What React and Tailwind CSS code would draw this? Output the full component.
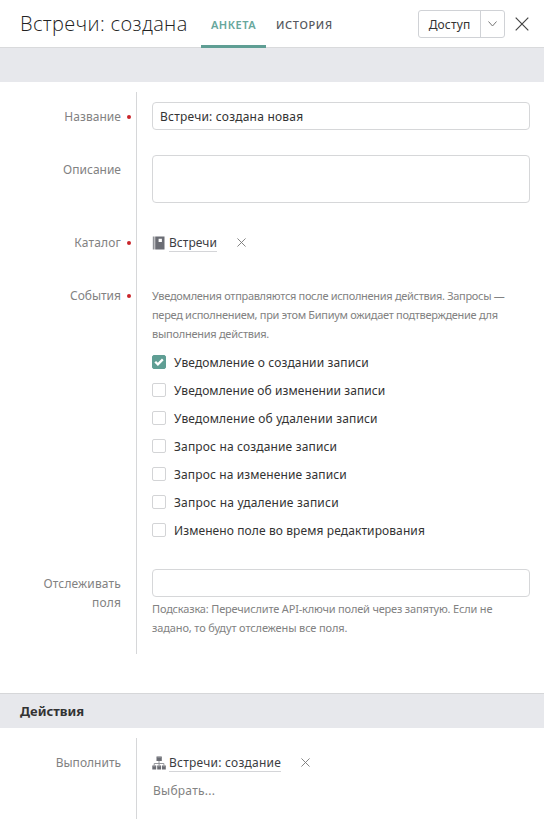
import React from "react";

const events = [
  { label: "Уведомление о создании записи", on: true, cls: "tracking-[0.12px]" },
  { label: "Уведомление об изменении записи", cls: "tracking-[0.08px]" },
  { label: "Уведомление об удалении записи", cls: "tracking-[0.16px]" },
  { label: "Запрос на создание записи", cls: "tracking-[0.15px]" },
  { label: "Запрос на изменение записи", cls: "tracking-[0.12px]" },
  { label: "Запрос на удаление записи", cls: "tracking-[0.2px]" },
  { label: "Изменено поле во время редактирования", cls: "tracking-[0.1px]" },
];

function Row({ label, required, height, labelCls = "", children }) {
  return (
    <div className={`flex ${height}`}>
      <div className="flex w-[136px] shrink-0 justify-end pt-[15px]">
        <div className={`w-[90px] text-right leading-[19px] text-[#828282] ${labelCls}`}>{label}</div>
        <div className="w-[15px] pl-[6px] pt-2">
          {required && <div className="size-1 rounded-full bg-[#c9252b]" />}
        </div>
      </div>
      <div className="w-[394px] border-l border-[#d6d7d9] pl-[15px]">{children}</div>
    </div>
  );
}

function Cross({ size, color }) {
  return (
    <svg width={size} height={size} viewBox="0 0 10 10" fill="none" stroke={color} strokeWidth={size > 12 ? 0.85 : 1} className="shrink-0">
      <path d="M.5.5l9 9M9.5.5l-9 9" />
    </svg>
  );
}

function Link({ icon, cls, children }) {
  return (
    <div className="flex h-[19px] items-center">
      <div className="w-[17px] shrink-0">{icon}</div>
      <span className={`h-[19px] border-b border-[#d4d5d8] leading-[20px] text-[#3b3d42] ${cls}`}>{children}</span>
      <div className="ml-[20px]"><Cross size={9} color="#777" /></div>
    </div>
  );
}

const Book = (
  <svg width="13" height="14" viewBox="0 0 13 14" fill="#6b6d74">
    <path d="M.8.5h1.8v13H.8z" opacity=".75" />
    <path d="M3.2.5h9.3v13H3.2zM6.6 2.7v3.2h3.3V2.7z" fillRule="evenodd" />
  </svg>
);

const Tree = (
  <svg width="14" height="14" viewBox="0 0 14 14" fill="#6b6d74">
    <path d="M4.5.5h5.3v4.6H4.5zM.3 9.4h3.9v4H.3zM5.2 9.4h3.9v4H5.2zM10 9.4h3.8v4H10z" />
    <path d="M7 5v2.5M2.2 9.4V7.5h9.7v1.9M7.1 7.5v1.9" fill="none" stroke="#8b8d93" strokeWidth=".9" />
    <path d="M5.3 1.3h3.7M1 10.2h2.5M5.9 10.2h2.5M10.7 10.2h2.4" fill="none" stroke="#9c9ea4" strokeWidth=".7" />
  </svg>
);

export default function App() {
  return (
    <div className="h-[821px] w-[544px] overflow-hidden bg-white font-['Noto_Sans','Open_Sans',sans-serif] text-[12px] text-[#333]">
      <header className="flex h-[48px] border-b border-[#d9dadc]">
        <h1 className="w-[181px] shrink-0 whitespace-nowrap pl-[20px] font-['Open_Sans','Noto_Sans',sans-serif] text-[20px] font-[350] leading-[48px] tracking-[0.35px] text-[#222]">Встречи: создана</h1>
        <nav className="ml-[20px] flex shrink-0 leading-[50px] text-[11px]">
          <div className="h-[48px] w-[65px] border-b-[3px] border-[#5f9e94] text-center font-semibold tracking-[0.5px] text-[#67a79c]">АНКЕТА</div>
          <div className="ml-[10px] font-medium tracking-[0.65px] text-[#55585e]">ИСТОРИЯ</div>
        </nav>
        <div className="ml-auto mr-[15px] flex items-center">
          <div className="flex h-[28px] w-[87px] rounded-[3px] border border-[#d0d2d6]">
            <div className="w-[62px] border-r border-[#d0d2d6] text-center leading-[27px] tracking-[0.15px]">Доступ</div>
            <div className="flex flex-1 items-center justify-center">
              <svg width="9" height="6" viewBox="0 0 9 6" fill="none" stroke="#777"><path d="M.5.5l4 4.5 4-4.5" /></svg>
            </div>
          </div>
          <div className="ml-[10px]"><Cross size={14} color="#444" /></div>
        </div>
      </header>
      <div className="h-[34px] bg-[#e7e8ec]" />
      <section className="pt-[10px]">
        <Row label="Название" required height="h-[53px]" labelCls="tracking-[0.05px]">
          <div className="mt-[10px] h-[28px] rounded-[4px] border border-[#d6d7d9] pl-[7px] leading-[27px] tracking-[0.21px]">Встречи: создана новая</div>
        </Row>
        <Row label="Описание" height="h-[73px]">
          <div className="mt-[10px] h-[48px] rounded-[4px] border border-[#d6d7d9]" />
        </Row>
        <Row label="Каталог" required height="h-[53px]" labelCls="tracking-[0.15px]">
          <div className="pt-[15px]"><Link icon={Book} cls="tracking-[0.05px]">Встречи</Link></div>
        </Row>
        <Row label="События" required height="h-[288px]">
          <p className="whitespace-nowrap pt-[15px] text-[11px] leading-[19px] tracking-[-0.3px] text-[#828282]">
            Уведомления отправляются после исполнения действия. Запросы —<br />
            перед исполнением, при этом Бипиум ожидает подтверждение для<br />
            <span className="tracking-[-0.26px]">выполнения действия.</span>
          </p>
          <div className="mt-[5px]">
            {events.map((e) => (
              <div key={e.label} className="flex h-[28px] items-center gap-2">
                <div className={`flex size-[14px] items-center justify-center rounded-[2px] border ${e.on ? "border-[#5f9e94] bg-[#5f9e94]" : "border-[#d3d4d6]"}`}>
                  {e.on && (
                    <svg width="10" height="8" viewBox="0 0 10 8" fill="none" stroke="#fff" strokeWidth="2.3" className="shrink-0"><path d="M1.2 3.7l2.7 2.7 4.9-5" /></svg>
                  )}
                </div>
                <span className={`${e.cls} whitespace-nowrap pt-[2px]`}>{e.label}</span>
              </div>
            ))}
          </div>
        </Row>
        <Row label="Отслеживать поля" height="h-[95px]" labelCls="tracking-[0.15px]">
          <div className="mt-[10px] h-[28px] rounded-[4px] border border-[#d6d7d9]" />
          <p className="mt-[2px] whitespace-nowrap text-[11px] leading-[19px] tracking-[-0.18px] text-[#828282]">
            Подсказка: Перечислите API-ключи полей через запятую. Если не<br />
            <span className="tracking-[-0.13px]">задано, то будут отслежены все поля.</span>
          </p>
        </Row>
      </section>
      <h2 className="mt-[39px] h-[35px] border-t border-[#d6d7d9] bg-[#e7e8ec] pl-[20px] text-[13px] font-bold leading-[35px]">Действия</h2>
      <section className="pt-[10px]">
        <Row label="Выполнить" height="h-[81px]">
          <div className="pt-[15px]"><Link icon={Tree} cls="tracking-[0.23px]">Встречи: создание</Link></div>
          <div className="mt-[9px] pl-px leading-[19px] tracking-[0.25px] text-[#828282]">Выбрать...</div>
        </Row>
      </section>
    </div>
  );
}
